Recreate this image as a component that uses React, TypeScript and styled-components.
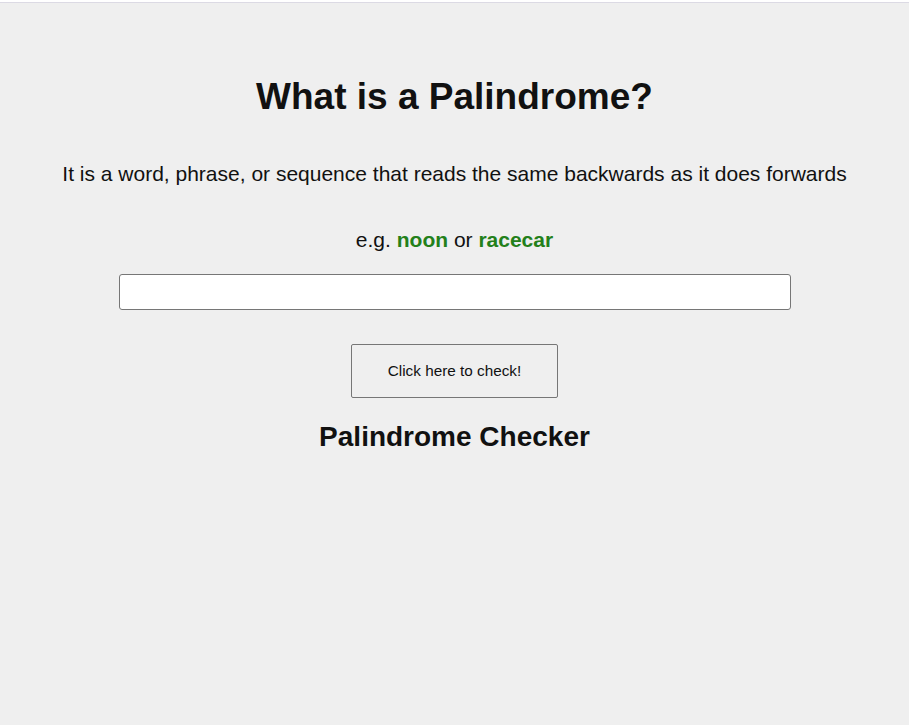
import React, { useState } from "react";
import styled, { createGlobalStyle } from "styled-components";

const Global = createGlobalStyle`
  html { background: #ffffff; }
  body {
    margin: 0;
    padding-top: 2px;
    font-family: "Liberation Sans", Arial, sans-serif;
  }
`;

const Page = styled.main`
  box-sizing: border-box;
  min-height: 723px;
  border-top: 1px solid #dcdae4;
  background: #efefef;
  display: flex;
  flex-direction: column;
  align-items: center;
  padding-top: 73px;
  color: #111111;
`;

const Title = styled.h1`
  margin: 0;
  font-size: 37px;
  font-weight: 700;
  line-height: 42px;
`;

const Lead = styled.p`
  margin: 44px 0 0;
  font-size: 21px;
  line-height: 24px;
`;

const Example = styled.p`
  margin: 42px 0 0;
  font-size: 21px;
  line-height: 24px;
`;

const Word = styled.strong`
  color: #23801a;
  font-weight: 700;
`;

const Field = styled.input`
  box-sizing: border-box;
  margin-top: 22px;
  width: 672px;
  height: 36px;
  border: 1px solid #767676;
  border-radius: 3px;
  background: #ffffff;
  padding: 0 8px;
  font-size: 16px;
  font-family: inherit;
  outline: none;
`;

const CheckButton = styled.button`
  box-sizing: border-box;
  margin-top: 34px;
  width: 207px;
  height: 54px;
  border: 1px solid #767676;
  border-radius: 2px;
  background: #efefef;
  color: #111111;
  font-family: inherit;
  font-size: 15.3px;
  cursor: pointer;
`;

const Subtitle = styled.h2`
  margin: 24px 0 0;
  font-size: 28px;
  font-weight: 700;
  line-height: 30px;
`;

export default function App() {
  const [value, setValue] = useState("");
  return (
    <>
      <Global />
      <Page>
        <Title>What is a Palindrome?</Title>
        <Lead>
          It is a word, phrase, or sequence that reads the same backwards as it does forwards
        </Lead>
        <Example>
          e.g. <Word>noon</Word> or <Word>racecar</Word>
        </Example>
        <Field value={value} onChange={(e) => setValue(e.target.value)} aria-label="text to check" />
        <CheckButton type="button">Click here to check!</CheckButton>
        <Subtitle>Palindrome Checker</Subtitle>
      </Page>
    </>
  );
}
